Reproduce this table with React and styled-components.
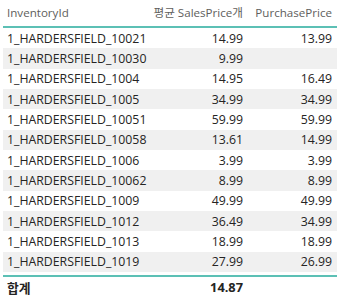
import styled, { createGlobalStyle } from "styled-components";

const GlobalStyle = createGlobalStyle`
  body {
    margin: 0;
    background: #fff;
    font-family: "Open Sans", "Noto Sans CJK KR", sans-serif;
  }
`;

const rows = [
  ["1_HARDERSFIELD_10021", "14.99", "13.99"],
  ["1_HARDERSFIELD_10030", "9.99", ""],
  ["1_HARDERSFIELD_1004", "14.95", "16.49"],
  ["1_HARDERSFIELD_1005", "34.99", "34.99"],
  ["1_HARDERSFIELD_10051", "59.99", "59.99"],
  ["1_HARDERSFIELD_10058", "13.61", "14.99"],
  ["1_HARDERSFIELD_1006", "3.99", "3.99"],
  ["1_HARDERSFIELD_10062", "8.99", "8.99"],
  ["1_HARDERSFIELD_1009", "49.99", "49.99"],
  ["1_HARDERSFIELD_1012", "36.49", "34.99"],
  ["1_HARDERSFIELD_1013", "18.99", "18.99"],
  ["1_HARDERSFIELD_1019", "27.99", "26.99"],
];

const Table = styled.div`
  width: 334px;
  margin-left: 3px;
  font-size: 12.3px;
  color: #252423;
`;

const Row = styled.div`
  display: grid;
  grid-template-columns: 145px 100px 89px;
  align-items: center;
  height: 20.33px;
  background: ${(p) => (p.$striped ? "#f0f0f0" : "transparent")};
`;

const HeadRow = styled(Row)`
  height: 28px;
  border-bottom: 2px solid #5cc0b5;
  color: #605e5c;
  font-size: 11.6px;
  padding-bottom: 2px;
  box-sizing: border-box;
`;

const Body = styled.div`
  padding-bottom: 3px;
`;

const FootRow = styled(Row)`
  height: 21px;
  border-top: 2px solid #5cc0b5;
  font-weight: 700;
  font-size: 12.8px;
  color: #252423;
`;

const Cell = styled.div`
  padding: 0 ${(p) => (p.$num ? "5px" : "4px")};
  text-align: ${(p) => (p.$num ? "right" : "left")};
  white-space: nowrap;
  overflow: hidden;
`;

export default function App() {
  return (
    <>
      <GlobalStyle />
      <Table>
        <HeadRow>
          <Cell>InventoryId</Cell>
          <Cell $num>평균 SalesPrice개</Cell>
          <Cell $num>PurchasePrice</Cell>
        </HeadRow>
        <Body>
          {rows.map((r, i) => (
            <Row key={r[0]} $striped={i % 2 === 1}>
              <Cell>{r[0]}</Cell>
              <Cell $num>{r[1]}</Cell>
              <Cell $num>{r[2]}</Cell>
            </Row>
          ))}
        </Body>
        <FootRow>
          <Cell>합계</Cell>
          <Cell $num>14.87</Cell>
          <Cell $num></Cell>
        </FootRow>
      </Table>
    </>
  );
}
